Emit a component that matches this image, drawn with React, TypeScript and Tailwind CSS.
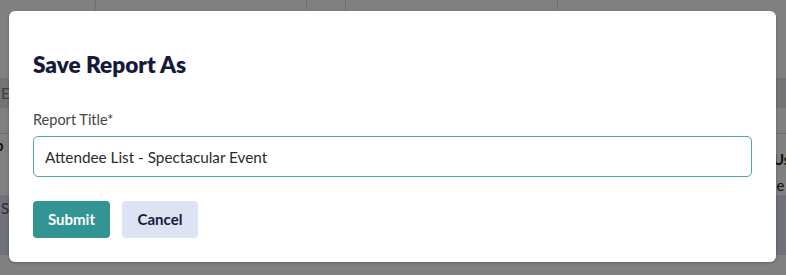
import { useState } from 'react'

export default function App() {
  const [title, setTitle] = useState('Attendee List - Spectacular Event')

  return (
    <div className="relative h-[275px] w-[786px] overflow-hidden bg-[#808080] font-['Lato','Noto_Sans',sans-serif]">
      {/* page behind the overlay */}
      <div className="flex h-full flex-col">
        <div className="flex h-[10px] shrink-0">
          <div className="w-[96px] border-r border-[#6e6e6e]" />
          <div className="w-[211px] border-r border-[#6e6e6e]" />
          <div className="w-[39px] border-r border-[#6e6e6e]" />
          <div className="w-[212px] border-r border-[#6e6e6e]" />
          <div className="flex-1" />
        </div>
        <div className="h-[68px] shrink-0" />
        <div className="flex h-[30px] shrink-0 items-center bg-[#747476] pl-[1px] text-[15px] text-[#3d3d3d]">
          Email
        </div>
        <div className="h-[25px] shrink-0" />
        <div className="flex h-[62px] shrink-0 justify-between border-t border-[#6e6e6e]">
          <div className="-ml-[22px] pt-[0px] text-[15px] font-bold text-[#111]">Imp</div>
          <div className="flex flex-col pt-[14px] text-[15px] leading-[22px] text-[#111]">
            <span className="-mr-[12px] font-bold">Usa</span>
            <span className="-mr-[8px] pt-[4px]">ie</span>
          </div>
        </div>
        <div className="flex h-[60px] shrink-0 items-start bg-[#6f7279] pl-[1px] pt-[2px] text-[15px] text-[#2d2d2d]">
          Status
        </div>
        <div className="flex-1" />
      </div>

      {/* modal */}
      <div className="absolute left-[9px] top-[11px] flex h-[251px] w-[767px] flex-col rounded-[6px] bg-white px-6 shadow-[0_1px_3px_rgba(0,0,0,0.25)]">
        <h2 className="pt-[40px] text-[22.6px] font-extrabold leading-[28px] text-[#151a3b]">Save Report As</h2>
        <label className="mt-[31px] text-[14.5px] leading-[20px] text-[#454545]">Report Title*</label>
        <input
          value={title}
          onChange={(e) => setTitle(e.target.value)}
          className="mt-[6px] h-[41px] w-full rounded-[5px] border border-[#4fa6a6] px-[11px] text-[15.3px] text-[#2b2b2b] outline-none"
        />
        <div className="mt-[24px] flex gap-3">
          <button className="h-[37px] w-[77px] rounded-[4px] bg-[#339494] text-[15px] font-bold text-white">Submit</button>
          <button className="h-[37px] w-[76px] rounded-[4px] bg-[#dde3f3] text-[15px] font-bold text-[#151a3b]">Cancel</button>
        </div>
      </div>
    </div>
  )
}
